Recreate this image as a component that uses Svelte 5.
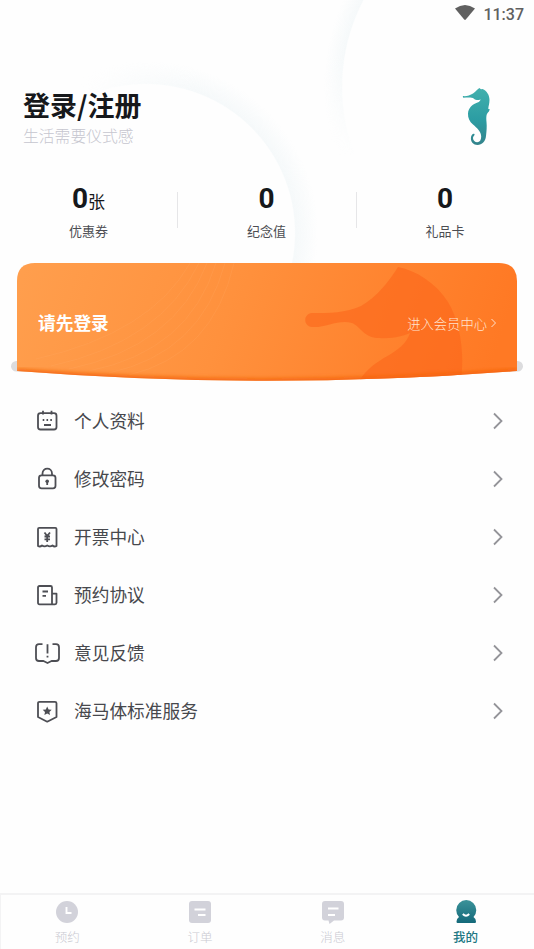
<script lang="ts">
    interface Entry {
        id: string;
        label: string;
    }

    let { loggedIn = false }: { loggedIn?: boolean } = $props();

    const stats = [
        { value: 0, unit: '张', label: '优惠券' },
        { value: 0, unit: '', label: '纪念值' },
        { value: 0, unit: '', label: '礼品卡' },
    ];

    const entries: Entry[] = [
        { id: 'profile', label: '个人资料' },
        { id: 'password', label: '修改密码' },
        { id: 'invoice', label: '开票中心' },
        { id: 'agreement', label: '预约协议' },
        { id: 'feedback', label: '意见反馈' },
        { id: 'service', label: '海马体标准服务' },
    ];

    const tabs: Entry[] = [
        { id: 'booking', label: '预约' },
        { id: 'orders', label: '订单' },
        { id: 'messages', label: '消息' },
        { id: 'mine', label: '我的' },
    ];

    let active = $state('mine');
</script>

<div class="page">
    <svg class="backdrop" width="534" height="270" viewBox="0 0 534 270" aria-hidden="true">
        <defs>
            <radialGradient id="glowA" gradientUnits="userSpaceOnUse" cx="146" cy="233" r="172">
                <stop offset="0.863" stop-color="#e9f2f5" stop-opacity="0" />
                <stop offset="0.87" stop-color="#e9f2f5" stop-opacity="0.38" />
                <stop offset="1" stop-color="#e9f2f5" stop-opacity="0" />
            </radialGradient>
            <radialGradient id="glowB" gradientUnits="userSpaceOnUse" cx="530" cy="87" r="206">
                <stop offset="0.909" stop-color="#e9f2f5" stop-opacity="0" />
                <stop offset="0.915" stop-color="#e9f2f5" stop-opacity="0.38" />
                <stop offset="1" stop-color="#e9f2f5" stop-opacity="0" />
            </radialGradient>
            <linearGradient id="fadeB" x1="0" y1="0" x2="0" y2="1">
                <stop offset="0.2" stop-color="#fff" />
                <stop offset="0.58" stop-color="#000" />
            </linearGradient>
            <linearGradient id="fadeA" x1="0" y1="0" x2="1" y2="0">
                <stop offset="0.15" stop-color="#000" />
                <stop offset="0.38" stop-color="#fff" />
            </linearGradient>
            <mask id="maskA"><rect width="534" height="270" fill="url(#fadeA)" /></mask>
            <mask id="maskB"><rect width="534" height="270" fill="url(#fadeB)" /></mask>
        </defs>
        <rect width="340" height="270" fill="url(#glowA)" mask="url(#maskA)" />
        <rect x="300" width="120" height="270" fill="url(#glowB)" mask="url(#maskB)" />
    </svg>

    <div class="statusbar">
        <svg width="20" height="16" viewBox="0 0 20 16"><path d="M0 3.5Q10 -3.5 20 3.5L10.8 14.5Q10 15.4 9.2 14.5Z" fill="#606060" /></svg>
        <span>11:37</span>
    </div>

    <header>
        <div>
            <h1>登录/注册</h1>
            <p>生活需要仪式感</p>
        </div>
        <svg class="logo" width="30" height="60" viewBox="0 0 30 60">
            <defs>
                <linearGradient id="sea" x1="0" y1="0" x2="0" y2="1">
                    <stop offset="0" stop-color="#42b0ad" />
                    <stop offset="0.55" stop-color="#2c9da3" />
                    <stop offset="1" stop-color="#33838b" />
                </linearGradient>
            </defs>
            <path
                fill="url(#sea)"
                d="M1 9C4 9.500 8 8.500 11 6.500C14 4.500 15 2.500 17.300 1L19 2.200L20.500 2C25 4 27.500 8 27.500 13C27.500 17 26.300 19 26.300 22L27.800 22.200L26.900 24.500C24 27 24.200 30 24.500 35C25 40 24.500 44 24 49C23.500 54.500 20 58 15.500 58C11.500 58 8.700 55 8.900 51C9 48 11 46.200 12.400 47C13.300 48 11 49 11 51.200C11 53.500 13 55.200 15.200 55.200C17.800 55.200 19.200 53 19.200 49.500C19.200 44.500 15 41 11 37.500C7.500 34.500 5.800 31 6 26.500C6.400 20.500 11 17 15.500 15.500C17.500 14.700 18.600 13.500 18.400 12.200C17 13.500 14 13.500 12 11.700C9.500 10 5.500 10.700 1.300 10.700Q0.500 9.500 1 9Z"
            />
        </svg>
    </header>

    <section class="stats">
        {#each stats as stat}
            <div class="stat">
                <div class="value"><b>{stat.value}</b>{#if stat.unit}<span>{stat.unit}</span>{/if}</div>
                <div class="caption">{stat.label}</div>
            </div>
        {/each}
    </section>

    <section class="member">
        <svg class="card" width="512" height="122" viewBox="0 0 512 122" aria-hidden="true">
            <defs>
                <linearGradient id="orange" x1="0" y1="0" x2="1" y2="0.08">
                    <stop offset="0" stop-color="#ff9f4e" />
                    <stop offset="0.45" stop-color="#ff913d" />
                    <stop offset="1" stop-color="#ff7924" />
                </linearGradient>
                <filter id="soften" x="-5%" y="-50%" width="110%" height="200%">
                    <feGaussianBlur stdDeviation="2" />
                </filter>
                <clipPath id="cardShape">
                    <path d="M6 108V18Q6 0 24 0H488Q506 0 506 18V108Q256 127.500 6 108Z" />
                </clipPath>
            </defs>
            <rect y="98" width="512" height="10.500" rx="5.250" fill="#dcdcde" />
            <g clip-path="url(#cardShape)">
                <rect width="512" height="122" fill="url(#orange)" />
                <g fill="none" stroke="#ffad68" stroke-opacity="0.22">
                    <path d="M40 103Q150 79 188 0M58 106Q164 84 196 0M78 108Q178 88 205 0M98 110Q190 90 214 0M25 96Q140 70 179 0M118 112Q202 92 223 0" />
                </g>
                <path
                    d="M387 4C379 17 366 34 350 43C335 50 318 50 301 50C292 51 292 63 301 64C315 65 328 56 341 60C350 64 353 75 368 75C382 76 392 73 399 70C391 94 361 92 346 122H449C454 97 451 62 437 39C425 20 406 8 387 4Z"
                    fill="#fb661b"
                    fill-opacity="0.6"
                />
                <path d="M6 109Q256 128.500 506 109" fill="none" stroke="#f46410" stroke-width="6" filter="url(#soften)" />
            </g>
        </svg>
        <strong>{loggedIn ? '欢迎回来' : '请先登录'}</strong>
        <a href="#member">进入会员中心<svg width="7" height="10" viewBox="0 0 7 10"><path d="M1.500 1L5.500 5L1.500 9" fill="none" stroke="currentColor" /></svg></a>
    </section>

    <nav class="menu">
        {#each entries as entry (entry.id)}
            <a href="#{entry.id}">
                <svg class="icon" width="26" height="26" viewBox="0 0 26 26">
                    {#if entry.id === 'profile'}
                        <rect x="4" y="5.200" width="18.500" height="16.300" rx="2.500" />
                        <path d="M9 2.800V6.500M17.500 2.800V6.500M10 17H17M8.700 12H10.300M12.500 12H14.100M16.300 12H17.900" />
                    {:else if entry.id === 'password'}
                        <rect x="5" y="9.300" width="16.500" height="13" rx="2.500" />
                        <path d="M8.500 9.300V7.500C8.500 1 18 1 18 7.500V9.300M13.200 16V19" />
                        <circle class="solid" cx="13.200" cy="15.200" r="1.800" />
                    {:else if entry.id === 'invoice'}
                        <path d="M4 22V5Q4 3.800 5.200 3.800H21.300Q22.500 3.800 22.500 5V22Q20.300 23.300 18.500 21.500Q16 23.300 13.200 21.500Q10.500 23.300 8 21.500Q6 23.300 4 22Z" />
                        <path d="M10.500 8.500L13.200 12L16 8.500M13.200 12V18M10.500 12.500H16M10.500 15.300H16" />
                    {:else if entry.id === 'agreement'}
                        <path d="M18 22.300H5.500Q4 22.300 4 20.800V5.500Q4 4 5.500 4H16.500Q18 4 18 5.500V22.300H21Q22.500 22.300 22.500 20.800V11.700H18M8.500 9.500H14M8.500 13.800H12" />
                    {:else if entry.id === 'feedback'}
                        <path d="M8.500 4.200H5Q2 4.200 2 7.200V18Q2 21 5 21H9.500L13.500 23L17.500 21H22Q25 21 25 18V7.200Q25 4.200 22 4.200H18.500M13.500 4.200V13.500M13.500 15.700V17.500" />
                    {:else}
                        <path d="M5.500 3.800H21Q22.500 3.800 22.500 5.300V19L13.200 23.700L4 19V5.300Q4 3.800 5.500 3.800Z" />
                        <path class="solid" d="M13.200 8.500L14.600 11.400L17.700 11.800L15.400 14L16 17.100L13.200 15.600L10.400 17.100L11 14L8.700 11.800L11.800 11.400Z" />
                    {/if}
                </svg>
                <span>{entry.label}</span>
                <svg class="arrow" width="12" height="18" viewBox="0 0 12 18"><path d="M2 1.500L9.500 9L2 16.500" /></svg>
            </a>
        {/each}
    </nav>

    <footer>
        {#each tabs as tab (tab.id)}
            <button class:active={active === tab.id} onclick={() => (active = tab.id)}>
                <svg width="24" height="24" viewBox="0 0 24 24">
                    {#if tab.id === 'booking'}
                        <circle cx="12" cy="12" r="11" />
                        <path class="cut" d="M11.500 7V13H16.500" />
                    {:else if tab.id === 'orders'}
                        <rect x="1" y="1" width="22" height="22" rx="3" />
                        <path class="cut" d="M6.500 9.500H17.500M10 15H17.500" />
                    {:else if tab.id === 'messages'}
                        <path d="M4 1H20Q23 1 23 4V17.500Q23 20.500 20 20.500H13L8.500 24L7.500 20.500H4Q1 20.500 1 17.500V4Q1 1 4 1Z" />
                        <path class="cut" d="M7 8.500H17.500M7 15H14" />
                    {:else}
                        <defs>
                            <linearGradient id="person" x1="0" y1="0" x2="0" y2="1">
                                <stop offset="0" stop-color="#3b9299" />
                                <stop offset="1" stop-color="#14697a" />
                            </linearGradient>
                        </defs>
                        <path fill="url(#person)" d="M5 17A10 10 0 1 1 19.500 17Q22 18.500 22 21.500Q22 23 21 23H3.500Q2.500 23 2.500 21.500Q2.500 18.500 5 17Z" />
                        <path class="smile" d="M8.800 14Q12 17.500 15.200 14" />
                    {/if}
                </svg>
                <span>{tab.label}</span>
            </button>
        {/each}
    </footer>
</div>

<style>
    :global(body) {
        margin: 0;
        background: #fefefe;
    }

    .page {
        position: relative;
        display: flex;
        flex-direction: column;
        box-sizing: border-box;
        width: 534px;
        height: 949px;
        overflow: hidden;
        background: #fefefe;
        color: #16181b;
        font-family: "Noto Sans CJK SC", sans-serif;
    }

    .backdrop {
        position: absolute;
        top: 0;
        left: 0;
    }

    .statusbar, header, .stats, .member {
        position: relative;
    }

    .statusbar {
        display: flex;
        justify-content: flex-end;
        align-items: center;
        gap: 8px;
        height: 28px;
        padding-right: 10px;
        color: #606060;
        font: 500 16px/28px Roboto, sans-serif;
    }

    .statusbar svg {
        margin-bottom: 2px;
    }

    .statusbar span {
        padding-top: 2px;
    }

    header {
        display: flex;
        justify-content: space-between;
        height: 122px;
        padding: 59px 42px 0 23px;
        box-sizing: border-box;
    }

    h1 {
        margin: 0;
        font-size: 27px;
        line-height: 36px;
        font-weight: 700;
    }

    header p {
        margin: 1px 0 0;
        font-size: 15.8px;
        line-height: 24px;
        font-weight: 300;
        color: #c6c6cf;
    }

    .stats {
        display: grid;
        grid-template-columns: 177px 179px 178px;
        height: 113px;
        padding-top: 30px;
        box-sizing: border-box;
    }

    .stat {
        height: 66px;
        text-align: center;
        background: linear-gradient(#e6e6e8, #e6e6e8) 0 12px / 1px 36px no-repeat;
    }

    .stat:first-child {
        background: none;
    }

    .value {
        display: flex;
        justify-content: center;
        align-items: baseline;
        box-sizing: border-box;
        height: 38px;
        padding-top: 1px;
        line-height: 36px;
    }

    .value b {
        font: 700 28px/36px Roboto, sans-serif;
    }

    .value span {
        font-size: 17px;
    }

    .caption {
        font-size: 13px;
        line-height: 26px;
        color: #4c4d52;
    }

    .member {
        display: flex;
        justify-content: space-between;
        align-items: center;
        box-sizing: border-box;
        height: 129px;
        padding: 0 37px 12px 38px;
        color: #fff;
    }

    .card {
        position: absolute;
        top: 0;
        left: 11px;
    }

    .member strong, .member a {
        position: relative;
    }

    .member strong {
        font-size: 17.7px;
    }

    .member a {
        display: flex;
        align-items: center;
        gap: 3px;
        padding-top: 3px;
        font-size: 13.3px;
        font-weight: 300;
        color: #ffe3cf;
        text-decoration: none;
    }

    .menu {
        display: flex;
        flex-direction: column;
    }

    .menu a {
        display: flex;
        align-items: center;
        height: 58px;
        padding: 0 30px 0 34px;
        color: #47484d;
        font-size: 17.7px;
        text-decoration: none;
    }

    .menu span {
        flex: 1;
        padding: 0 0 2px 14px;
    }

    .icon {
        fill: none;
        stroke: #4d4e54;
        stroke-width: 1.8;
        stroke-linejoin: round;
    }

    .icon .solid {
        fill: #4d4e54;
        stroke: none;
    }

    .arrow {
        fill: none;
        stroke: #949499;
        stroke-width: 1.8;
    }

    footer {
        display: flex;
        box-sizing: border-box;
        height: 56px;
        margin-top: auto;
        padding-right: 2px;
        border-top: 2px solid #f3f3f4;
        border-left: 1px solid #f3f3f4;
    }

    footer button {
        flex: 1;
        display: flex;
        flex-direction: column;
        align-items: center;
        padding: 5px 0 0;
        border: none;
        background: none;
        color: #cacad2;
        font: 300 12.5px/26px "Noto Sans CJK SC", sans-serif;
    }

    footer button.active {
        color: #207783;
        font-weight: 500;
    }

    footer svg {
        flex: none;
        fill: #d2d2da;
    }

    .cut, .smile {
        fill: none;
        stroke: #fff;
        stroke-width: 1.9;
    }
</style>
